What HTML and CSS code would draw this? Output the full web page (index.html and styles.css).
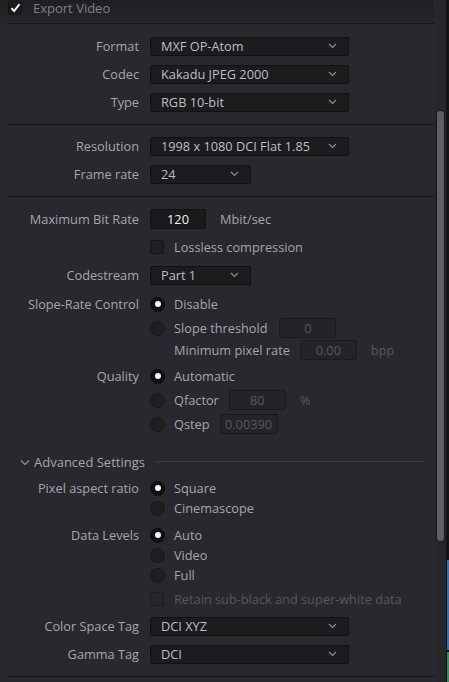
FILE: index.html
```html
<!DOCTYPE html>
<html>
<head>
  <title>Export Video</title>
  <link rel="stylesheet" href="styles.css">
</head>
<body>
  <div class="window">
    <div class="panel">
      <div class="header">
        <span class="check on"><svg width="11" height="10" viewBox="0 0 11 10"><path d="M1.5 5.2 L4.2 8 L9.5 1.2" fill="none" stroke="#f2f2f2" stroke-width="2"/></svg></span>
        <span class="header-title">Export Video</span>
      </div>
      <div class="sep"></div>

      <div class="section s1">
        <div class="row"><span class="label">Format</span><div class="select wide"><span>MXF OP-Atom</span><svg class="chev" width="9" height="6" viewBox="0 0 9 6"><path d="M1 1 L4.5 4.5 L8 1" fill="none" stroke="#8c8f94" stroke-width="1.2"/></svg></div></div>
        <div class="row"><span class="label">Codec</span><div class="select wide"><span>Kakadu JPEG 2000</span><svg class="chev" width="9" height="6" viewBox="0 0 9 6"><path d="M1 1 L4.5 4.5 L8 1" fill="none" stroke="#8c8f94" stroke-width="1.2"/></svg></div></div>
        <div class="row"><span class="label">Type</span><div class="select wide"><span>RGB 10-bit</span><svg class="chev" width="9" height="6" viewBox="0 0 9 6"><path d="M1 1 L4.5 4.5 L8 1" fill="none" stroke="#8c8f94" stroke-width="1.2"/></svg></div></div>
      </div>
      <div class="sep"></div>

      <div class="section s2">
        <div class="row"><span class="label">Resolution</span><div class="select wide"><span>1998 x 1080 DCI Flat 1.85</span><svg class="chev" width="9" height="6" viewBox="0 0 9 6"><path d="M1 1 L4.5 4.5 L8 1" fill="none" stroke="#8c8f94" stroke-width="1.2"/></svg></div></div>
        <div class="row"><span class="label">Frame rate</span><div class="select short"><span>24</span><svg class="chev" width="9" height="6" viewBox="0 0 9 6"><path d="M1 1 L4.5 4.5 L8 1" fill="none" stroke="#8c8f94" stroke-width="1.2"/></svg></div></div>
      </div>
      <div class="sep"></div>

      <div class="section s3">
        <div class="row">
          <span class="label">Maximum Bit Rate</span>
          <div class="line"><span class="field bitrate">120</span><span class="unit">Mbit/sec</span></div>
        </div>
        <div class="row">
          <span></span>
          <div class="line"><span class="check"></span><span class="opt">Lossless compression</span></div>
        </div>
        <div class="row codestream"><span class="label">Codestream</span><div class="select short"><span>Part 1</span><svg class="chev" width="9" height="6" viewBox="0 0 9 6"><path d="M1 1 L4.5 4.5 L8 1" fill="none" stroke="#8c8f94" stroke-width="1.2"/></svg></div></div>

        <div class="group">
          <div class="row r24"><span class="label">Slope-Rate Control</span><div class="line"><span class="radio on"></span><span class="opt">Disable</span></div></div>
          <div class="row r24"><span></span><div class="line"><span class="radio"></span><span class="opt">Slope threshold</span><span class="field dim w56 slope">0</span></div></div>
          <div class="row r20"><span></span><div class="line indent"><span class="opt">Minimum pixel rate</span><span class="field dim w56 minpix">0.00</span><span class="unit dimunit">bpp</span></div></div>
        </div>

        <div class="group">
          <div class="row r24"><span class="label">Quality</span><div class="line"><span class="radio on"></span><span class="opt">Automatic</span></div></div>
          <div class="row r24"><span></span><div class="line"><span class="radio"></span><span class="opt">Qfactor</span><span class="field dim w56 qfactor">80</span><span class="unit dimunit">%</span></div></div>
          <div class="row r24"><span></span><div class="line"><span class="radio"></span><span class="opt">Qstep</span><span class="field dim w57 qstep">0.00390</span></div></div>
        </div>

        <div class="advanced">
          <svg class="adv-chev" width="10" height="7" viewBox="0 0 10 7"><path d="M1 1.5 L5 5.5 L9 1.5" fill="none" stroke="#8c8f94" stroke-width="1.2"/></svg>
          <span class="adv-title">Advanced Settings</span>
          <span class="adv-line"></span>
        </div>

        <div class="group g-par">
          <div class="row r20"><span class="label">Pixel aspect ratio</span><div class="line"><span class="radio on"></span><span class="opt">Square</span></div></div>
          <div class="row r20"><span></span><div class="line"><span class="radio"></span><span class="opt">Cinemascope</span></div></div>
        </div>

        <div class="group g-levels">
          <div class="row r20"><span class="label">Data Levels</span><div class="line"><span class="radio on"></span><span class="opt">Auto</span></div></div>
          <div class="row r20"><span></span><div class="line"><span class="radio"></span><span class="opt">Video</span></div></div>
          <div class="row r20"><span></span><div class="line"><span class="radio"></span><span class="opt">Full</span></div></div>
          <div class="row r20 retain"><span></span><div class="line"><span class="check disabled"></span><span class="opt off">Retain sub-black and super-white data</span></div></div>
        </div>

        <div class="group g-tags">
          <div class="row"><span class="label">Color Space Tag</span><div class="select wide"><span>DCI XYZ</span><svg class="chev" width="9" height="6" viewBox="0 0 9 6"><path d="M1 1 L4.5 4.5 L8 1" fill="none" stroke="#8c8f94" stroke-width="1.2"/></svg></div></div>
          <div class="row"><span class="label">Gamma Tag</span><div class="select wide"><span>DCI</span><svg class="chev" width="9" height="6" viewBox="0 0 9 6"><path d="M1 1 L4.5 4.5 L8 1" fill="none" stroke="#8c8f94" stroke-width="1.2"/></svg></div></div>
        </div>
      </div>
      <div class="sep"></div>
    </div>

    <div class="scrollbar"><div class="thumb"></div></div>
    <div class="edge">
      <div class="strip blue"></div>
      <div class="strip green"></div>
    </div>
  </div>
</body>
</html>
```

FILE: styles.css
```css
body {
  margin: 0;
  padding: 0;
  background-color: #28282e;
  font-family: "Open Sans", "Liberation Sans", sans-serif;
  font-size: 12.75px;
  color: #a4a7ac;
  overflow: hidden;
}

.window {
  display: flex;
  width: 449px;
  height: 682px;
  overflow: hidden;
}

.panel {
  width: 435px;
  flex: none;
  background-color: #28282e;
}

.header {
  height: 23px;
  display: flex;
  align-items: center;
  background: linear-gradient(#1f1f23, #25252a);
  padding-left: 8px;
  margin-right: 1px;
}

.header .check {
  margin-top: -7px;
}

.header-title {
  margin-left: 11px;
  margin-top: -8px;
  font-size: 13px;
  color: #7e8186;
}

.sep {
  height: 1px;
  background-color: #141417;
  margin: 0 1px 0 7px;
}

.section.s1 {
  padding: 8px 0 8px 0;
}

.section.s2 {
  padding: 7px 0 8px 0;
}

.section.s3 {
  padding: 8px 0 8px 0;
}

.row {
  display: grid;
  grid-template-columns: 139px 1fr;
  column-gap: 11px;
  align-items: center;
  height: 28px;
}

.row.r24 {
  height: 24px;
}

.row.r20 {
  height: 20px;
}

.label {
  text-align: right;
  white-space: nowrap;
  color: #a4a7ac;
}

.select {
  height: 17px;
  background-color: #1c1c1f;
  border: 1px solid #111113;
  border-radius: 2px;
  display: flex;
  align-items: center;
  justify-content: space-between;
  padding: 0 10px;
  color: #bdbfc2;
  box-sizing: content-box;
}

.select.wide {
  width: 177px;
}

.select.short {
  width: 79px;
}

.chev {
  margin-right: 1px;
}

.line {
  display: flex;
  align-items: center;
  white-space: nowrap;
}

.field {
  height: 18px;
  line-height: 18px;
  background-color: #1a1a1c;
  border: 1px solid #111113;
  border-radius: 2px;
  text-align: center;
  color: #f4f4f4;
}

.field.bitrate {
  width: 54px;
}

.field.dim {
  background-color: #242428;
  border-color: #1b1b1e;
  color: #55585d;
}

.field.w56 {
  width: 55px;
}

.field.w57 {
  width: 56px;
}

.field.slope {
  margin-left: 12px;
}

.field.minpix {
  margin-left: 10px;
}

.field.qfactor {
  margin-left: 10px;
}

.field.qstep {
  margin-left: 10px;
}

.unit {
  margin-left: 14px;
  color: #a4a7ac;
}

.unit.dimunit {
  color: #55585d;
}

.check {
  width: 12px;
  height: 12px;
  border: 1px solid #141416;
  border-radius: 2px;
  background-color: #1f1f22;
  display: inline-flex;
  align-items: center;
  justify-content: center;
  flex: none;
}

.check.on {
  background-color: #1b1b1e;
}

.check.disabled {
  background-color: #262629;
  border-color: #1d1d20;
}

.radio {
  width: 13px;
  height: 13px;
  border-radius: 50%;
  background-color: #1f1f22;
  border: 1px solid #18181a;
  flex: none;
  position: relative;
}

.radio.on {
  background-color: #111113;
  border-color: #0b0b0c;
}

.radio.on::after {
  content: "";
  position: absolute;
  left: 3.5px;
  top: 3.5px;
  width: 6px;
  height: 6px;
  border-radius: 50%;
  background-color: #f2f2f2;
}

.opt {
  margin-left: 9px;
  color: #a4a7ac;
}

.line.indent .opt {
  margin-left: 24px;
}

.opt.off {
  color: #55585d;
}

.line .check + .opt {
  margin-left: 10px;
}

.row.codestream {
  height: 26px;
  margin-top: 1px;
}

.group {
  margin-top: 4px;
}

.advanced {
  display: flex;
  align-items: center;
  height: 24px;
  margin-top: 14px;
  padding-left: 20px;
}

.adv-title {
  margin-left: 4px;
  font-size: 13px;
  color: #a4a7ac;
}

.adv-line {
  flex: 1;
  height: 1px;
  background-color: #3c3c42;
  margin: 0 11px 1px 10px;
}

.group.g-par {
  margin-top: 4px;
}

.group.g-levels {
  margin-top: 7px;
}

.row.retain {
  margin-top: 4px;
}

.group.g-tags {
  margin-top: 3px;
}

.scrollbar {
  width: 11px;
  flex: none;
  background-color: #26262b;
  padding-top: 110px;
}

.thumb {
  width: 7px;
  height: 430px;
  margin-left: 1px;
  background-color: #5c5f65;
  border: 1px solid #18181b;
  border-radius: 4px;
}

.edge {
  width: 3px;
  flex: none;
  background-color: #141416;
  padding-top: 560px;
}

.strip {
  margin-left: 1px;
  width: 2px;
}

.strip.blue {
  height: 90px;
  background-color: #3b6fa6;
}

.strip.green {
  height: 32px;
  margin-top: 2px;
  background-color: #3d8a5c;
}
```
